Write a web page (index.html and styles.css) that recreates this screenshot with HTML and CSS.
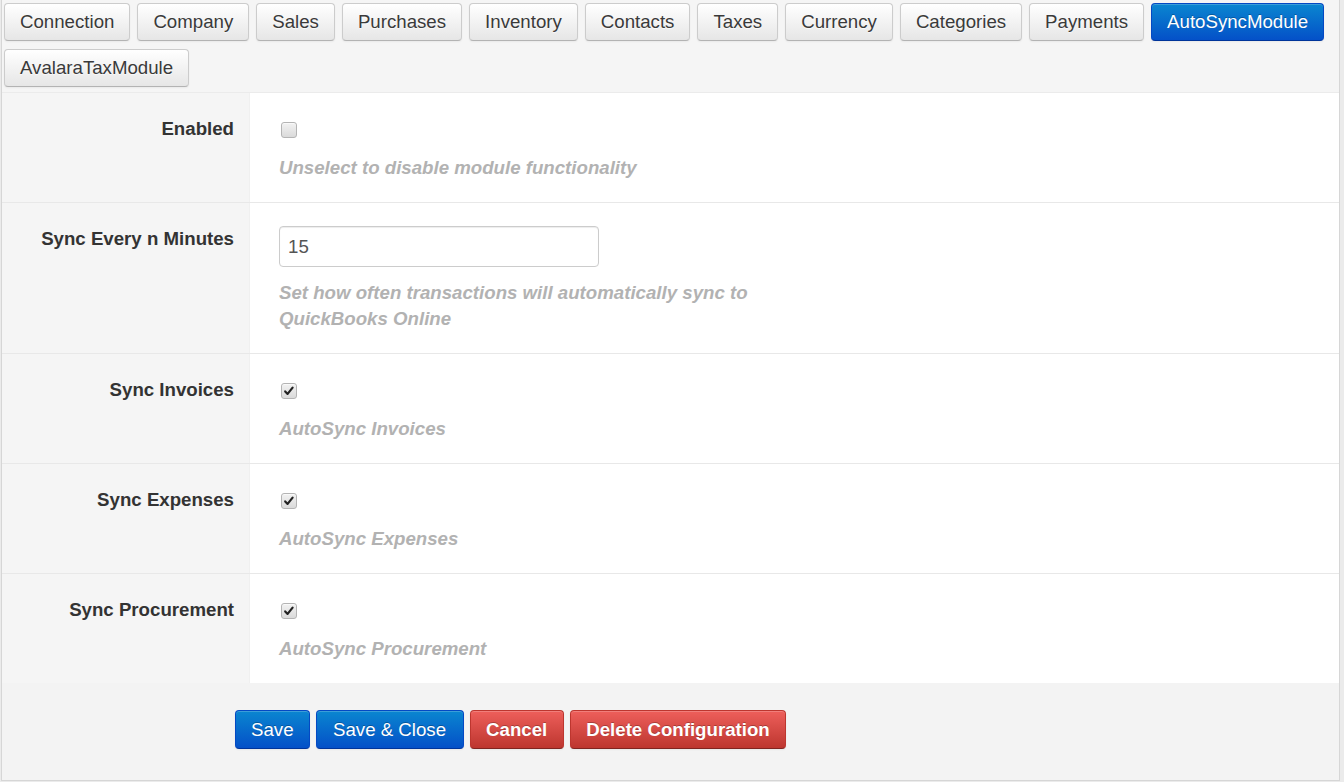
FILE: index.html
```html
<!DOCTYPE html>
<html lang="en">
<head>
<meta charset="utf-8">
<title>AutoSyncModule configuration</title>
<link rel="stylesheet" href="styles.css">
</head>
<body>
<div class="panel">
  <div class="tabs">
    <button class="btn">Connection</button>
    <button class="btn">Company</button>
    <button class="btn">Sales</button>
    <button class="btn">Purchases</button>
    <button class="btn">Inventory</button>
    <button class="btn">Contacts</button>
    <button class="btn">Taxes</button>
    <button class="btn">Currency</button>
    <button class="btn">Categories</button>
    <button class="btn">Payments</button>
    <button class="btn btn-primary btn-tab-active">AutoSyncModule</button>
    <button class="btn">AvalaraTaxModule</button>
  </div>
  <div class="form">
    <div class="row">
      <div class="label">Enabled</div>
      <div class="field">
        <div class="ctl"><span class="cb"></span></div>
        <div class="help">Unselect to disable module functionality</div>
      </div>
    </div>
    <div class="row">
      <div class="label">Sync Every n Minutes</div>
      <div class="field">
        <div class="ctl ctl-input"><input class="input" type="text" value="15"></div>
        <div class="help">Set how often transactions will automatically sync to QuickBooks Online</div>
      </div>
    </div>
    <div class="row">
      <div class="label">Sync Invoices</div>
      <div class="field">
        <div class="ctl"><span class="cb checked"><svg viewBox="0 0 16 16" width="16" height="16"><path d="M4.2 8.4 L6.6 10.9 L11.6 4.6" fill="none" stroke="#222" stroke-width="2.2" stroke-linecap="round" stroke-linejoin="round"/></svg></span></div>
        <div class="help">AutoSync Invoices</div>
      </div>
    </div>
    <div class="row">
      <div class="label">Sync Expenses</div>
      <div class="field">
        <div class="ctl"><span class="cb checked"><svg viewBox="0 0 16 16" width="16" height="16"><path d="M4.2 8.4 L6.6 10.9 L11.6 4.6" fill="none" stroke="#222" stroke-width="2.2" stroke-linecap="round" stroke-linejoin="round"/></svg></span></div>
        <div class="help">AutoSync Expenses</div>
      </div>
    </div>
    <div class="row last">
      <div class="label">Sync Procurement</div>
      <div class="field">
        <div class="ctl"><span class="cb checked"><svg viewBox="0 0 16 16" width="16" height="16"><path d="M4.2 8.4 L6.6 10.9 L11.6 4.6" fill="none" stroke="#222" stroke-width="2.2" stroke-linecap="round" stroke-linejoin="round"/></svg></span></div>
        <div class="help">AutoSync Procurement</div>
      </div>
    </div>
  </div>
  <div class="actions">
    <button class="btn btn-primary">Save</button>
    <button class="btn btn-primary btn-wide">Save &amp; Close</button>
    <button class="btn btn-danger btn-mid">Cancel</button>
    <button class="btn btn-danger btn-mid">Delete Configuration</button>
  </div>
</div>
</body>
</html>
```
FILE: styles.css
```css
html, body {
  margin: 0;
  padding: 0;
  background: #ebebeb;
}
body {
  font-family: "Liberation Sans", Arial, sans-serif;
  font-size: 18.67px;
  color: #333;
}
.panel {
  margin-left: 1px;
  width: 1339px;
  box-sizing: border-box;
  border: 1px solid #d6d6d6;
  border-top: 0;
  background: #f5f5f5;
}
.tabs {
  display: flex;
  flex-wrap: wrap;
  gap: 8px 7px;
  padding: 3px 2px 5px 2px;
  border-bottom: 1px solid #ebebeb;
}
.btn-tab-active {
  margin-left: -2px;
  padding: 0 16px;
}
.btn {
  box-sizing: border-box;
  height: 38px;
  padding: 0 15px;
  margin: 0;
  font-family: inherit;
  font-size: 18.67px;
  line-height: 36px;
  color: #3a3a3a;
  background: linear-gradient(#ffffff, #e6e6e6);
  border: 1px solid #cccccc;
  border-bottom-color: #b3b3b3;
  border-radius: 4px;
  box-shadow: inset 0 1px 0 rgba(255,255,255,.2), 0 1px 2px rgba(0,0,0,.05);
  text-shadow: 0 1px 1px rgba(255,255,255,.75);
  cursor: pointer;
}
.btn-primary {
  color: #fff;
  background: linear-gradient(#0a86d0, #0450c8);
  border-color: #0449c4 #0449c4 #00349a;
  text-shadow: 0 -1px 0 rgba(0,0,0,.25);
}
.btn-danger {
  color: #fff;
  font-weight: bold;
  background: linear-gradient(#ee5f5b, #bd362f);
  border-color: #bd362f #bd362f #802420;
  text-shadow: 0 -1px 0 rgba(0,0,0,.25);
}
.form {
  background: #fff;
}
.row {
  display: flex;
  border-bottom: 1px solid #e8e8e8;
}
.row.last {
  border-bottom-color: #f3f3f3;
}
.label {
  flex: 0 0 248px;
  box-sizing: border-box;
  background: #f5f5f5;
  text-align: right;
  font-weight: bold;
  line-height: 26px;
  padding: 23px 15px 0 0;
  border-right: 1px solid #f0f0f0;
}
.field {
  flex: 1;
  padding: 23px 29px 21px;
  background: #fff;
}
.ctl {
  height: 26px;
  display: flex;
  align-items: flex-start;
}
.ctl-input {
  height: 41px;
}
.cb {
  display: block;
  box-sizing: border-box;
  width: 16px;
  height: 16px;
  margin-top: 6px;
  margin-left: 2px;
  border: 1px solid #b4b4b4;
  border-radius: 3px;
  background: linear-gradient(#f2f2f2, #dadada);
  box-shadow: inset 0 1px 0 rgba(255,255,255,.6);
}
.cb svg {
  display: block;
  margin: -1px 0 0 -1px;
}
.input {
  box-sizing: border-box;
  width: 320px;
  height: 41px;
  margin: 0;
  padding: 0 8px;
  font-family: inherit;
  font-size: 18.67px;
  color: #555;
  border: 1px solid #cccccc;
  border-radius: 4px;
  box-shadow: inset 0 1px 1px rgba(0,0,0,.075);
  background: #fff;
}
.help {
  margin-top: 13px;
  max-width: 480px;
  line-height: 26px;
  font-weight: bold;
  font-style: italic;
  color: #b2b2b2;
}
.actions {
  display: flex;
  gap: 6px;
  padding: 26px 0 31px 233px;
  background: #f3f3f3;
}
.actions .btn {
  height: 39px;
  line-height: 37px;
}
.actions .btn-wide {
  padding: 0 16.5px;
}
.actions .btn-mid {
  padding: 0 15.5px;
}
```
